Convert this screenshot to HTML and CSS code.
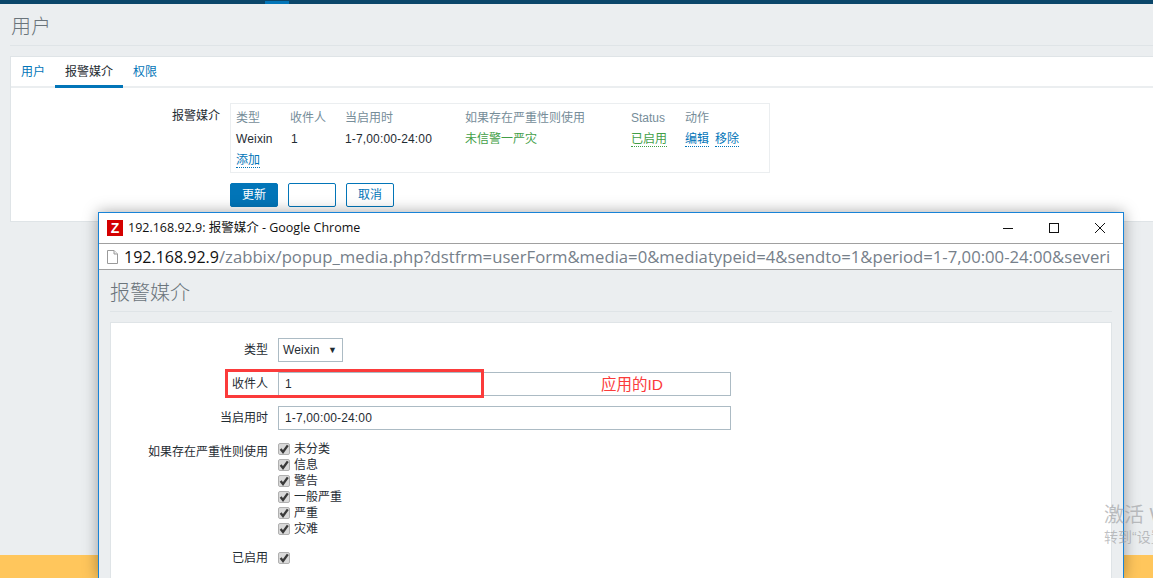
FILE: index.html
```html
<!DOCTYPE html>
<html lang="zh">
<head>
<meta charset="utf-8">
<title>用户</title>
<link rel="stylesheet" href="styles.css">
</head>
<body>
<svg class="defs" width="0" height="0" aria-hidden="true">
  <symbol id="chk" viewBox="0 0 12 12">
    <rect x="0.5" y="0.5" width="11" height="11" rx="1.5" fill="#d9d9d9" stroke="#b0b0b0"/>
    <path d="M2.600 6 5 9 9.800 2.400" fill="none" stroke="#3a3a3a" stroke-width="2.300"/>
  </symbol>
</svg>
<div class="page">
  <div class="topbar"><span class="topbar-mark"></span></div>
  <main class="main">
    <h1 class="title">用户</h1>
    <section class="card">
      <nav class="tabs">
        <a class="tab">用户</a>
        <a class="tab tab-active">报警媒介</a>
        <a class="tab">权限</a>
      </nav>
      <div class="user-form">
        <div class="user-label">报警媒介</div>
        <div class="user-fields">
          <div class="media-box">
            <table class="media-table">
              <tr class="head">
                <th class="c1">类型</th><th class="c2">收件人</th><th class="c3">当启用时</th><th class="c4">如果存在严重性则使用</th><th class="c5">Status</th><th>动作</th>
              </tr>
              <tr>
                <td class="latin">Weixin</td><td class="latin one">1</td><td class="latin">1-7,00:00-24:00</td><td class="green">未信警一严灾</td><td><a class="green dotted">已启用</a></td><td><a class="link dotted">编辑</a><a class="link dotted second">移除</a></td>
              </tr>
              <tr><td colspan="6"><a class="link dotted">添加</a></td></tr>
            </table>
          </div>
          <div class="buttons">
            <button class="btn btn-primary">更新</button>
            <button class="btn"></button>
            <button class="btn">取消</button>
          </div>
        </div>
      </div>
    </section>
  </main>
  <div class="footer"></div>
</div>
<div class="popup">
  <div class="win-title">
    <span class="favicon">Z</span>
    <span class="win-text">192.168.92.9: 报警媒介 - Google Chrome</span>
    <span class="win-controls">
      <svg width="12" height="12" viewBox="0 0 12 12"><path d="M1 6.500h10" stroke="#111" fill="none"/></svg>
      <svg width="12" height="12" viewBox="0 0 12 12"><rect x="1.500" y="1.500" width="9" height="9" stroke="#111" fill="none"/></svg>
      <svg width="12" height="12" viewBox="0 0 12 12"><path d="M1 1l10 10M11 1 1 11" stroke="#111" fill="none"/></svg>
    </span>
  </div>
  <div class="addr">
    <svg class="file" width="13" height="16" viewBox="0 0 13 16"><path d="M1.500 1.500h6.500l3.500 3.500v9.500h-10z" fill="#fff" stroke="#9a9a9a"/><path d="M8 1.500v3.500h3.500" fill="#eee" stroke="#9a9a9a"/></svg>
    <div class="url"><span class="host">192.168.92.9</span>/zabbix/popup_media.php?dstfrm=userForm&amp;media=0&amp;mediatypeid=4&amp;sendto=1&amp;period=1-7,00:00-24:00&amp;severi</div>
  </div>
  <div class="popup-body">
    <h1 class="title popup-title">报警媒介</h1>
    <section class="popup-card">
      <div class="form-grid">
        <label class="lab">类型</label>
        <div class="select latin">Weixin<span class="arrow">▼</span></div>
        <label class="lab">收件人</label>
        <div class="input latin">1</div>
        <label class="lab">当启用时</label>
        <div class="input latin">1-7,00:00-24:00</div>
        <label class="lab lab-top">如果存在严重性则使用</label>
        <div class="checks">
          <div class="check"><svg class="cb"><use href="#chk"/></svg>未分类</div>
          <div class="check"><svg class="cb"><use href="#chk"/></svg>信息</div>
          <div class="check"><svg class="cb"><use href="#chk"/></svg>警告</div>
          <div class="check"><svg class="cb"><use href="#chk"/></svg>一般严重</div>
          <div class="check"><svg class="cb"><use href="#chk"/></svg>严重</div>
          <div class="check"><svg class="cb"><use href="#chk"/></svg>灾难</div>
        </div>
        <label class="lab lab-last">已启用</label>
        <div class="check check-last"><svg class="cb"><use href="#chk"/></svg></div>
      </div>
      <div class="red-box"></div>
      <div class="red-note">应用的ID</div>
    </section>
  </div>
</div>
<div class="watermark">
  <div class="wm1">激活 Windows</div>
  <div class="wm2">转到“设置”以激活 Windows。</div>
</div>
</body>
</html>
```
FILE: styles.css
```css
* { box-sizing: border-box; }
html, body { margin: 0; padding: 0; height: 100%; overflow: hidden; }
body {
  position: relative;
  width: 1153px;
  height: 578px;
  background: #ebeef0;
  color: #1f2c33;
  font: 12px/14px "Liberation Sans", "Noto Sans CJK SC", sans-serif;
}
.defs { position: absolute; }
.page { display: flex; flex-direction: column; height: 578px; }
.topbar { height: 4px; background: #0a466a; padding-left: 265px; flex: none; }
.topbar-mark { display: block; width: 24px; height: 3px; margin-top: 1px; background: #0275b8; }
.main { flex: 1; padding: 0 0 0 10px; }
.title {
  margin: 0;
  height: 42px;
  padding: 13px 0 0 1px;
  font-weight: 300;
  font-size: 20px;
  line-height: 20px;
  color: #6a747b;
  border-bottom: 1px solid #dfe4e7;
}
.card {
  margin-top: 10px;
  height: 166px;
  background: #fff;
  border: 1px solid #dfe4e7;
  border-right: 0;
}
.tabs { display: flex; height: 31px; border-bottom: 2px solid #ebeef0; }
.tab {
  height: 31px;
  padding: 8px 10px 0;
  color: #0275b8;
  border-bottom: 3px solid transparent;
}
.tab-active { color: #1f2c33; border-bottom-color: #0275b8; }
.user-form { display: flex; padding-top: 15px; }
.user-label { width: 209px; text-align: right; padding-top: 6px; }
.user-fields { margin-left: 10px; }
.media-box { width: 540px; height: 70px; border: 1px solid #ebeef0; padding: 3px 5px 0; }
.media-table { border-collapse: collapse; }
.media-table th, .media-table td { padding: 0; text-align: left; font-weight: 400; height: 21px; white-space: nowrap; }
.media-table .head th { color: #768d99; }
.c1 { width: 54px; }
.c2 { width: 55px; }
.c3 { width: 120px; }
.c4 { width: 166px; }
.c5 { width: 54px; }
.latin { letter-spacing: .15px; }
.one { padding-left: 1px !important; }
.green { color: #429e47; }
.link { color: #0275b8; }
.dotted { border-bottom: 1px dotted currentColor; }
.second { margin-left: 6px; }
.buttons { display: flex; gap: 10px; margin-top: 10px; }
.btn {
  width: 48px;
  height: 24px;
  padding: 0;
  background: #fff;
  color: #0275b8;
  border: 1px solid #0275b8;
  border-radius: 2px;
  font: inherit;
}
.btn-primary { background: #0275b8; color: #fff; }
.footer { height: 23px; flex: none; background: #ffc65c; }
.watermark {
  position: absolute;
  left: 1104px;
  top: 503px;
  width: 49px;
  overflow: hidden;
  color: rgba(150, 152, 155, .6);
  white-space: nowrap;
}
.wm1 { font-size: 20px; line-height: 24px; }
.wm2 { font-size: 14px; line-height: 18px; margin-top: 1px; }
.popup {
  position: absolute;
  left: 98px;
  top: 212px;
  width: 1026px;
  height: 366px;
  border: 1px solid #1883d7;
  border-bottom: 0;
  background: #ebeef0;
  box-shadow: 0 0 14px rgba(0, 0, 0, .35);
  overflow: hidden;
}
.win-title { display: flex; align-items: center; height: 30px; background: #fff; padding: 0 0 0 8px; }
.favicon {
  width: 16px;
  height: 16px;
  background: #d40000;
  color: #fff;
  font: 700 14px/16px "Liberation Sans", sans-serif;
  text-align: center;
}
.win-text {
  margin-left: 5px;
  font: 12.5px/16px "Open Sans", "Noto Sans CJK SC", sans-serif;
  color: #111;
}
.win-controls { margin-left: auto; display: flex; gap: 34px; padding-right: 17px; }
.addr {
  display: flex;
  align-items: center;
  height: 27px;
  background: #fff;
  border-top: 1px solid #a0a0a0;
  border-bottom: 1px solid #a0a0a0;
  padding: 0 3px 0 7px;
}
.file { flex: none; }
.url {
  margin-left: 5px;
  font: 16.7px/24px "Open Sans", sans-serif;
  color: #76808a;
  white-space: nowrap;
  overflow: hidden;
}
.host { color: #111; font-size: 16px; }
.popup-body { padding: 0 11px; }
.popup-title { height: 42px; padding-left: 0; }
.popup-card {
  position: relative;
  margin-top: 10px;
  height: 300px;
  background: #fff;
  border: 1px solid #dfe4e7;
  padding-top: 15px;
}
.form-grid {
  display: grid;
  grid-template-columns: 157px 453px;
  column-gap: 10px;
  row-gap: 10px;
  align-items: center;
}
.lab { text-align: right; color: #1f2c33; }
.lab-top { align-self: start; margin-top: 5px; }
.lab-last { margin-top: 3px; line-height: 16px; }
.select {
  display: flex;
  align-items: center;
  justify-content: space-between;
  width: 65px;
  height: 24px;
  padding: 0 5px 0 4px;
  border: 1px solid #acbbc4;
}
.arrow { font-size: 9px; color: #1f2c33; }
.input {
  height: 24px;
  padding: 0 6px;
  line-height: 22px;
  border: 1px solid #acbbc4;
}
.checks { padding-top: 1px; }
.check { display: flex; align-items: center; height: 16px; }
.check-last { margin-top: 3px; }
.cb { width: 12px; height: 12px; margin-right: 4px; flex: none; }
.red-box {
  position: absolute;
  left: 114px;
  top: 46px;
  width: 259px;
  height: 29px;
  border: 3px solid #fb3b3b;
}
.red-note {
  position: absolute;
  left: 490px;
  top: 53px;
  font-size: 15.5px;
  line-height: 18px;
  color: #fb3b3b;
}
```
